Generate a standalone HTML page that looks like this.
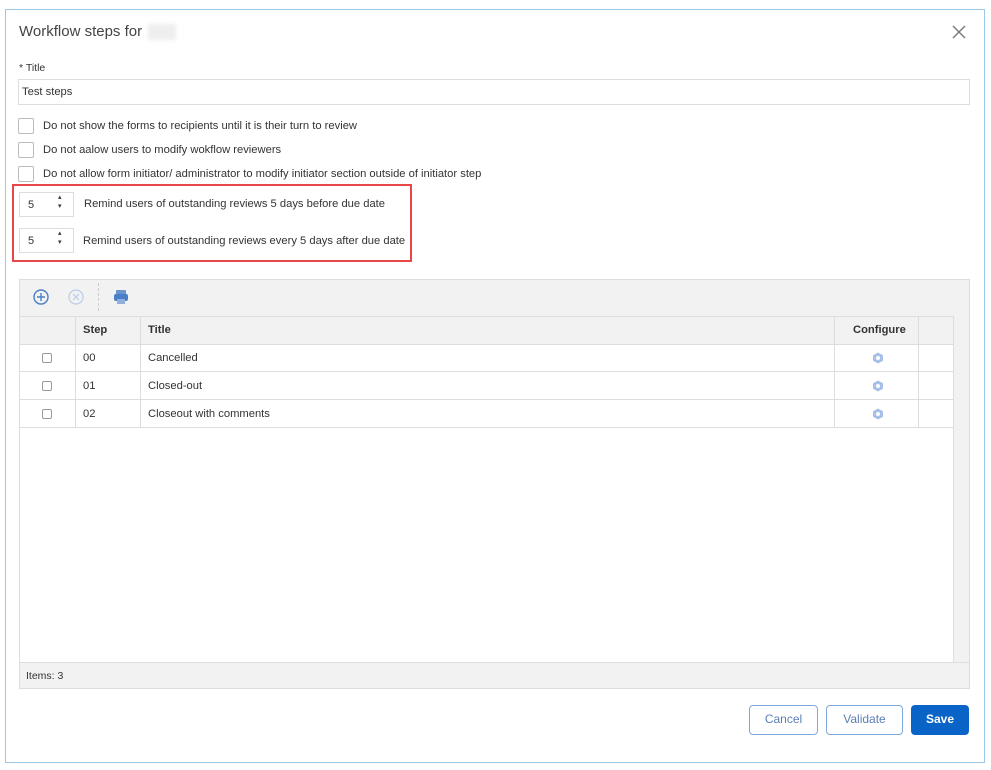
<!DOCTYPE html>
<html><head><style>
*{box-sizing:border-box;margin:0;padding:0}
body{width:991px;height:770px;background:#fff;font-family:"Liberation Sans",sans-serif;color:#333;position:relative;overflow:hidden}
.a{position:absolute}
.dlg{left:5px;top:9px;width:980px;height:754px;border:1.5px solid #9cc8e8;background:#fff}
.t{font-size:11.2px;color:#333;white-space:nowrap}
.cb{width:16px;height:16px;border:1px solid #bbb;border-radius:2px;background:#fff}
.sp{width:55px;height:25px;border:1px solid #ddd;font-size:11px;padding:6px 0 0 8px}
.g{border:1px solid #ddd}
.vl{width:1px;background:#ddd}
.hl{height:1px;background:#ddd}
.btn{height:30px;border:1.5px solid #7fa8dc;border-radius:4px;color:#5b7fb5;font-size:12px;text-align:center;line-height:27px;background:#fff}
.sc{width:10px;height:10px;border:1px solid #999;border-radius:2px}
</style></head><body>
<div class="a dlg"></div>
<div class="a" style="left:19px;top:23px;font-size:15px;color:#444">Workflow steps for</div>
<div class="a" style="left:148px;top:24px;width:28px;height:16px;background:#eee;filter:blur(2px)"></div>
<svg class="a" style="left:952px;top:25px" width="14" height="14"><path d="M1 1L13 13M13 1L1 13" stroke="#777" stroke-width="1.4"/></svg>
<div class="a t" style="left:19px;top:62px;font-size:10.5px">* Title</div>
<div class="a" style="left:18px;top:79px;width:952px;height:26px;border:1px solid #ddd"></div>
<div class="a t" style="left:22px;top:86px">Test steps</div>
<div class="a cb" style="left:18px;top:118px"></div><div class="a t" style="left:43px;top:120px">Do not show the forms to recipients until it is their turn to review</div>
<div class="a cb" style="left:18px;top:142px"></div><div class="a t" style="left:43px;top:144px">Do not aalow users to modify wokflow reviewers</div>
<div class="a cb" style="left:18px;top:166px"></div><div class="a t" style="left:43px;top:168px">Do not allow form initiator/ administrator to modify initiator section outside of initiator step</div>
<div class="a" style="left:12px;top:184px;width:400px;height:78px;border:2px solid #e8474a"></div>
<div class="a sp" style="left:19px;top:192px">5</div>
<div class="a" style="left:58px;top:193px;font-size:7px;line-height:9px;color:#333">▴<br>▾</div>
<div class="a t" style="left:84px;top:198px">Remind users of outstanding reviews 5 days before due date</div>
<div class="a sp" style="left:19px;top:228px">5</div>
<div class="a" style="left:58px;top:229px;font-size:7px;line-height:9px;color:#333">▴<br>▾</div>
<div class="a t" style="left:83px;top:235px">Remind users of outstanding reviews every 5 days after due date</div>

<div class="a g" style="left:19px;top:279px;width:951px;height:410px"></div>
<div class="a" style="left:20px;top:280px;width:949px;height:64px;background:#f2f2f2"></div>
<div class="a hl" style="left:20px;top:316px;width:949px"></div>
<svg class="a" style="left:32px;top:288px" width="18" height="18"><circle cx="9" cy="9" r="7" fill="none" stroke="#4a7fc8" stroke-width="1.4"/><path d="M9 5v8M5 9h8" stroke="#4a7fc8" stroke-width="1.4"/></svg>
<svg class="a" style="left:67px;top:288px" width="18" height="18"><circle cx="9" cy="9" r="7" fill="none" stroke="#b8cdea" stroke-width="1.2"/><path d="M6 6l6 6M12 6l-6 6" stroke="#b8cdea" stroke-width="1.2"/></svg>
<div class="a" style="left:98px;top:283px;width:1px;height:28px;border-left:1px dashed #ccc"></div>
<svg class="a" style="left:113px;top:289px" width="16" height="16"><rect x="3" y="1" width="10" height="5" rx="1" fill="#6a95cc"/><rect x="1" y="5" width="14" height="7" rx="2" fill="#4a7fc8"/><rect x="4" y="10" width="8" height="5" fill="#8fb0dd"/></svg>
<div class="a hl" style="left:20px;top:344px;width:933px"></div>
<div class="a hl" style="left:20px;top:371px;width:933px"></div>
<div class="a hl" style="left:20px;top:399px;width:933px"></div>
<div class="a hl" style="left:20px;top:427px;width:933px"></div>
<div class="a vl" style="left:75px;top:316px;height:111px"></div>
<div class="a vl" style="left:140px;top:316px;height:111px"></div>
<div class="a vl" style="left:834px;top:316px;height:111px"></div>
<div class="a vl" style="left:918px;top:316px;height:111px"></div>
<div class="a" style="left:953px;top:316px;width:16px;height:346px;background:#f2f2f2;border-left:1px solid #ddd"></div>
<div class="a t" style="left:83px;top:324px;font-weight:bold">Step</div>
<div class="a t" style="left:148px;top:324px;font-weight:bold">Title</div>
<div class="a t" style="left:853px;top:324px;font-weight:bold">Configure</div>
<div class="a sc" style="left:42px;top:353px"></div><div class="a t" style="left:83px;top:352px">00</div><div class="a t" style="left:148px;top:352px">Cancelled</div>
<div class="a sc" style="left:42px;top:381px"></div><div class="a t" style="left:83px;top:380px">01</div><div class="a t" style="left:148px;top:380px">Closed-out</div>
<div class="a sc" style="left:42px;top:409px"></div><div class="a t" style="left:83px;top:408px">02</div><div class="a t" style="left:148px;top:408px">Closeout with comments</div>
<svg class="a" style="left:872px;top:352px" width="12" height="12"><polygon points="6,0.5 11,3.3 11,8.7 6,11.5 1,8.7 1,3.3" fill="#a9bfe6"/><circle cx="6" cy="6" r="2" fill="#fff"/></svg>
<svg class="a" style="left:872px;top:380px" width="12" height="12"><polygon points="6,0.5 11,3.3 11,8.7 6,11.5 1,8.7 1,3.3" fill="#a9bfe6"/><circle cx="6" cy="6" r="2" fill="#fff"/></svg>
<svg class="a" style="left:872px;top:408px" width="12" height="12"><polygon points="6,0.5 11,3.3 11,8.7 6,11.5 1,8.7 1,3.3" fill="#a9bfe6"/><circle cx="6" cy="6" r="2" fill="#fff"/></svg>
<div class="a" style="left:20px;top:662px;width:949px;height:26px;background:#f2f2f2;border-top:1px solid #ddd"></div>
<div class="a t" style="left:26px;top:670px;font-size:10.5px">Items: 3</div>
<div class="a btn" style="left:749px;top:705px;width:69px">Cancel</div>
<div class="a btn" style="left:826px;top:705px;width:77px">Validate</div>
<div class="a btn" style="left:911px;top:705px;width:58px;background:#0a64c8;border-color:#0a64c8;color:#fff;font-weight:bold">Save</div>
</body></html>
